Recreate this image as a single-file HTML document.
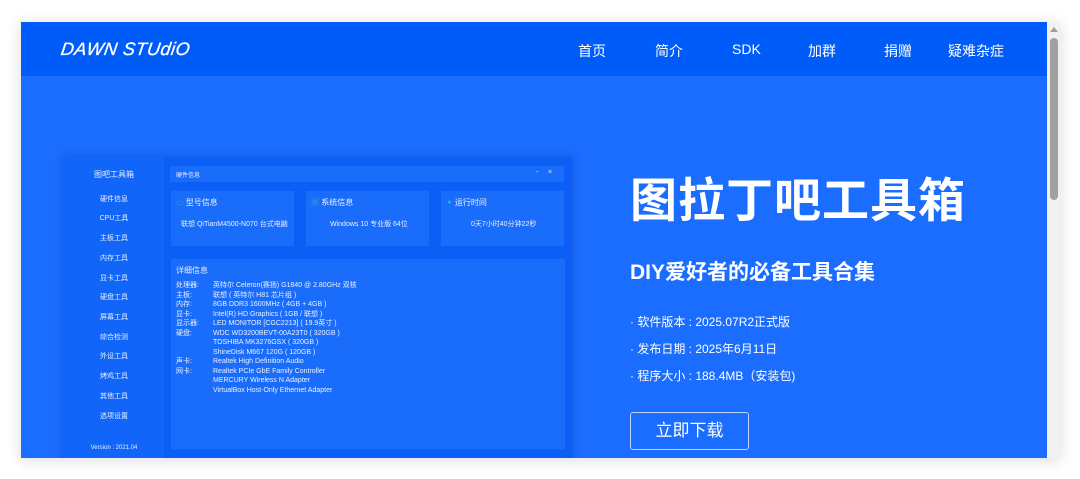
<!DOCTYPE html>
<html><head><meta charset="utf-8"><style>
*{margin:0;padding:0;box-sizing:border-box}
body{width:1080px;height:479px;background:#fff;font-family:"Liberation Sans","Noto Sans CJK SC",sans-serif;position:relative;overflow:hidden}
.frame{position:absolute;left:21px;top:22px;width:1039px;height:436px;background:#1a6dff;box-shadow:0 2px 14px rgba(0,0,0,.15);overflow:hidden}
.hdr{position:absolute;left:0;top:0;width:1026px;height:54px;background:#005cf8}
.logo{position:absolute;left:40px;top:17px;color:#fff;font-style:italic;font-size:18px;letter-spacing:0.5px;transform:skewX(-8deg);-webkit-text-stroke:0.3px #fff}
.nav{position:absolute;top:19px;color:#fff;font-size:14px}
.sb{position:absolute;left:1026px;top:0;width:13px;height:436px;background:#f1f1f1}
.thumb{position:absolute;left:1029px;top:16px;width:8px;height:162px;background:#a0a0a0;border-radius:4px}
.arr{position:absolute;left:1029px;top:5px;width:0;height:0;border-left:4px solid transparent;border-right:4px solid transparent;border-bottom:5px solid #a0a0a0}
.app{position:absolute;left:43px;top:135px;width:508px;height:310px;background:#0b5ff5;box-shadow:0 0 8px rgba(0,40,150,.35)}
.side{position:absolute;left:0;top:0;width:100px;height:310px;background:#1166f9}
.side div{position:absolute;width:100px;text-align:center;color:#e8f0ff;font-size:7px}
.t{color:#eaf1ff;position:absolute;font-size:7px;white-space:nowrap}
.card{position:absolute;background:#1a6cfb}
.right{position:absolute;color:#fff}
</style></head><body>
<div class="frame">
<div class="hdr">
<div class="logo">DAWN STUdiO</div>
<div class="nav" style="left:557px">首页</div>
<div class="nav" style="left:634px">简介</div>
<div class="nav" style="left:711px">SDK</div>
<div class="nav" style="left:787px">加群</div>
<div class="nav" style="left:863px">捐赠</div>
<div class="nav" style="left:927px">疑难杂症</div>
</div>
<div class="app">
<div class="side">
<div style="top:12px;font-size:8px">图吧工具箱</div>
<div style="top:37px">硬件信息</div>
<div style="top:56px">CPU工具</div>
<div style="top:76px">主板工具</div>
<div style="top:96px">内存工具</div>
<div style="top:116px">显卡工具</div>
<div style="top:135px">硬盘工具</div>
<div style="top:155px">屏幕工具</div>
<div style="top:175px">综合检测</div>
<div style="top:194px">外设工具</div>
<div style="top:214px">烤鸡工具</div>
<div style="top:234px">其他工具</div>
<div style="top:254px">选项设置</div>
<div style="top:288px;font-size:6px">Version : 2021.04</div>
</div>
<div class="card" style="left:106px;top:9px;width:394px;height:16px"></div>
<div class="t" style="left:112px;top:13px;font-size:6px">硬件信息</div>
<div class="t" style="left:472px;top:12px">-&nbsp;&nbsp;&nbsp;&nbsp;&nbsp;×</div>
<div class="card" style="left:107px;top:34px;width:123px;height:55px"></div>
<div class="card" style="left:242px;top:34px;width:123px;height:55px"></div>
<div class="card" style="left:377px;top:34px;width:123px;height:55px"></div>
<div class="t" style="left:112px;top:40px;font-size:8px"><span style="color:#3ad">▭</span> 型号信息</div>
<div class="t" style="left:247px;top:40px;font-size:8px"><span style="color:#3ad">▦</span> 系统信息</div>
<div class="t" style="left:382px;top:40px;font-size:8px"><span style="color:#3ad">✦</span> 运行时间</div>
<div class="t" style="left:117px;top:62px">联想 QiTianM4500-N070 台式电脑</div>
<div class="t" style="left:266px;top:62px">Windows 10 专业版 64位</div>
<div class="t" style="left:407px;top:62px">0天7小时40分钟22秒</div>
<div class="card" style="left:107px;top:102px;width:394px;height:190px"></div>
<div class="t" style="left:112px;top:108px;font-size:8px">详细信息</div>
<div class="t" style="left:112px;top:124px;line-height:9.5px">处理器:<br>主板:<br>内存:<br>显卡:<br>显示器:<br>硬盘:<br><br><br>声卡:<br>网卡:</div>
<div class="t" style="left:149px;top:124px;line-height:9.5px">英特尔 Celeron(赛扬) G1840 @ 2.80GHz 双核<br>联想 ( 英特尔 H81 芯片组 )<br>8GB DDR3 1600MHz ( 4GB + 4GB )<br>Intel(R) HD Graphics ( 1GB / 联想 )<br>LED MONITOR [CGC2213] ( 19.9英寸 )<br>WDC WD3200BEVT-00A23T0 ( 320GB )<br>TOSHIBA MK3276GSX ( 320GB )<br>ShineDisk M667 120G ( 120GB )<br>Realtek High Definition Audio<br>Realtek PCIe GbE Family Controller<br>MERCURY Wireless N Adapter<br>VirtualBox Host-Only Ethernet Adapter</div>
</div>
<div class="right" style="left:609px;top:140px;font-size:47px;font-weight:bold;letter-spacing:1px">图拉丁吧工具箱</div>
<div class="right" style="left:609px;top:234px;font-size:21px;font-weight:bold">DIY爱好者的必备工具合集</div>
<div class="right" style="left:609px;top:291px;font-size:12px">· 软件版本 : 2025.07R2正式版</div>
<div class="right" style="left:609px;top:318px;font-size:12px">· 发布日期 : 2025年6月11日</div>
<div class="right" style="left:609px;top:345px;font-size:12px">· 程序大小 : 188.4MB（安装包)</div>
<div class="right" style="left:609px;top:390px;width:119px;height:38px;border:1px solid rgba(255,255,255,.7);border-radius:3px;text-align:center;line-height:36px;font-size:17px">立即下载</div>
<div class="sb"></div><div class="arr"></div><div class="thumb"></div>
</div>
</body></html>
